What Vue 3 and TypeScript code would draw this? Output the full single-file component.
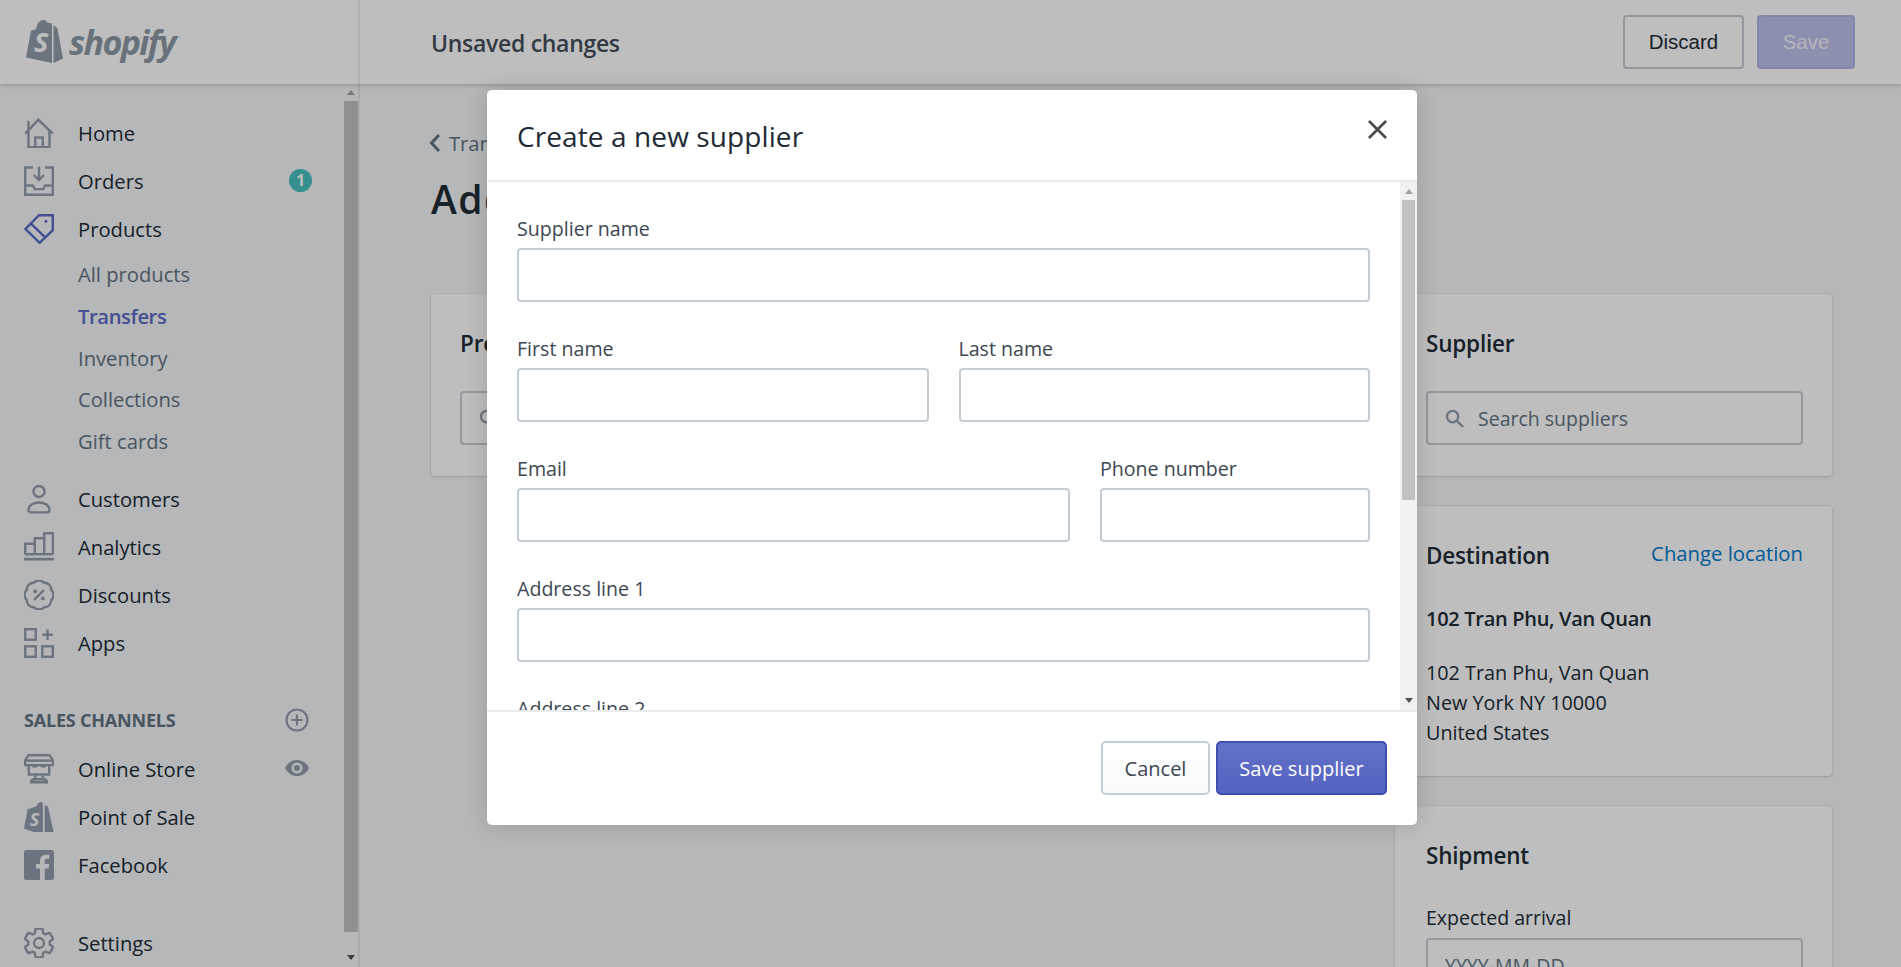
<script setup lang="ts">
interface NavItem { label: string; icon: string; active?: boolean }

const stroke = 'fill="none" stroke="currentColor" stroke-width="1.6"'
const icons: Record<string, string> = {
  home: `<g ${stroke}><path d="M.8 10.400 9.600 1.200l9.600 9.200"/><path d="M3 2v17.400h14V8.500"/><path d="M7.500 19v-6h5v6"/></g>`,
  orders: `<g ${stroke}><path d="M6 1H.8v18.200h18.400V1H14"/><path d="M1 13h5l1.200 2.400h5.600L14 13h5"/><path d="M10 .5V9M6.600 6l3.400 3.400L13.400 6"/></g>`,
  tag: `<g ${stroke}><path d="M19.200.8v10L10.400 19.200 1 10 10 .8z"/><path d="M4.600 6.400 14 15.400"/></g><circle cx="14.600" cy="4.800" r="1" fill="currentColor"/>`,
  customer: `<g ${stroke}><circle cx="10" cy="5" r="3.700"/><path d="M3 17.300c0-3.200 3.200-5 7-5s7 1.800 7 5c0 1-.7 1.600-1.600 1.600H4.600C3.700 18.900 3 18.300 3 17.300z"/></g>`,
  analytics: `<g ${stroke}><path d="M.8 14.800V7.800h6.400V14.800M7.200 14.800V4.200h6.300V14.800M13.500 14.800V.8h5.800v14"/><path d="M.8 14.800h18.500"/></g><path d="M0 17.200h20v1.800H0z" fill="currentColor"/>`,
  discount: `<g ${stroke}><path d="M18.130 6.630A4.500 4.500 0 0 0 13.370 1.870 4.500 4.500 0 0 0 6.630 1.870 4.500 4.500 0 0 0 1.870 6.630 4.500 4.500 0 0 0 1.870 13.370 4.500 4.500 0 0 0 6.630 18.130 4.500 4.500 0 0 0 13.370 18.130 4.500 4.500 0 0 0 18.130 13.370 4.500 4.500 0 0 0 18.130 6.630z"/><path d="M6.800 13.200 13.200 6.800"/></g><circle cx="7.500" cy="7.700" r="1.300" fill="currentColor"/><circle cx="12.500" cy="12.300" r="1.300" fill="currentColor"/>`,
  apps: `<g ${stroke}><rect x=".8" y=".8" width="7" height="7"/><rect x=".8" y="12.200" width="7" height="7"/><rect x="12.200" y="12.200" width="7" height="7"/><path d="M15.700 1v7M12.200 4.500h7"/></g>`,
  store: `<g ${stroke}><path d="M3 .8h14l2.300 3.400v3.200H.7V4.200z"/><path d="M.7 4.400h18.600"/><path d="M3.200 7.400v6.300h13.600V7.400"/><path d="M7.500 13.700v3M12.500 13.700v3"/><path d="M4.800 18.800c0-1.300.8-2 2-2h6.400c1.200 0 2 .7 2 2z"/><path d="M5.800 7.400c0 1.300 2.800 1.300 2.800 0M11.400 7.400c0 1.300 2.800 1.300 2.800 0"/></g>`,
  pos: `<path d="M0 17.800 2.400 4.800 8.200 3C9 1 10.400-.3 12-.3l.6 2V22z" fill="currentColor"/><path d="M13.800 1.800 16 3.200 20 21 13.800 22z" fill="currentColor"/><text x="3.800" y="16" font-family="Open Sans, sans-serif" font-size="12" font-weight="700" font-style="italic" fill="#f4f6f8">S</text>`,
  facebook: `<rect width="20" height="20" rx="1.500" fill="currentColor"/><path d="M13.800 20v-7.700h2.600l.4-3h-3V7.400c0-.9.300-1.500 1.500-1.500h1.600V3.200c-.3 0-1.200-.1-2.300-.1-2.300 0-3.900 1.400-3.900 4v2.200H8v3h2.700V20z" fill="#f4f6f8"/>`,
  settings: `<g transform="translate(-2 -2)" fill="none" stroke="currentColor" stroke-width="1.600"><path d="M19.140 12.940c.04-.3.06-.61.06-.94 0-.32-.02-.64-.07-.94l2.030-1.580c.18-.14.23-.41.12-.61l-1.920-3.320c-.12-.22-.37-.29-.59-.22l-2.390.96c-.5-.38-1.030-.7-1.620-.94L14.400 2.810c-.04-.24-.24-.41-.48-.41h-3.840c-.24 0-.43.17-.47.41L9.250 5.350c-.59.24-1.130.57-1.620.94l-2.390-.96c-.22-.08-.47 0-.59.22L2.740 8.870c-.12.21-.08.47.12.61l2.030 1.580c-.05.3-.09.63-.09.94s.02.64.07.94l-2.030 1.580c-.18.14-.23.41-.12.61l1.920 3.320c.12.22.37.29.59.22l2.390-.96c.5.38 1.030.7 1.620.94l.36 2.540c.05.24.24.41.48.41h3.840c.24 0 .44-.17.47-.41l.36-2.540c.59-.24 1.130-.56 1.620-.94l2.390.96c.22.08.47 0 .59-.22l1.920-3.320c.12-.22.07-.47-.12-.61z"/><circle cx="12" cy="12" r="3.300"/></g>`,
}

const primary: NavItem[] = [
  { label: 'Home', icon: 'home' },
  { label: 'Orders', icon: 'orders' },
  { label: 'Products', icon: 'tag', active: true },
]
const subItems = ['All products', 'Transfers', 'Inventory', 'Collections', 'Gift cards']
const secondary: NavItem[] = [
  { label: 'Customers', icon: 'customer' },
  { label: 'Analytics', icon: 'analytics' },
  { label: 'Discounts', icon: 'discount' },
  { label: 'Apps', icon: 'apps' },
]
const channels: NavItem[] = [
  { label: 'Online Store', icon: 'store' },
  { label: 'Point of Sale', icon: 'pos' },
  { label: 'Facebook', icon: 'facebook' },
]
</script>

<template>
  <div class="page">
    <header class="topbar">
      <div class="brand">
        <svg class="bag" viewBox="0 0 37 43" aria-hidden="true">
          <path d="M0 37.500 5 10.800 10 9.200C11 3.500 14 .3 17 0c2.500-.2 3.800 1.300 4.500 2.800L26 3.600V43z" fill="currentColor" />
          <path d="M27.500 5 31.500 8.500 37 38.500 27.500 43z" fill="currentColor" />
          <text x="8" y="32" class="bag-s">S</text>
        </svg>
        <span class="wordmark">shopify</span>
      </div>
      <div class="bar-main">
        <span class="bar-title">Unsaved changes</span>
        <div class="bar-actions">
          <button class="bar-btn">Discard</button>
          <button class="bar-btn bar-save">Save</button>
        </div>
      </div>
    </header>

    <div class="frame">
      <aside class="sidebar">
        <nav class="nav">
          <a v-for="item in primary" :key="item.label" class="row">
            <svg class="icon" :class="{ on: item.active }" viewBox="0 0 20 20" v-html="icons[item.icon]"></svg>
            <span>{{ item.label }}</span>
            <span v-if="item.label === 'Orders'" class="badge">1</span>
          </a>
          <div class="subs">
            <a v-for="sub in subItems" :key="sub" class="sub" :class="{ current: sub === 'Transfers' }">{{ sub }}</a>
          </div>
          <div class="group">
            <a v-for="item in secondary" :key="item.label" class="row">
              <svg class="icon" viewBox="0 0 20 20" v-html="icons[item.icon]"></svg>
              <span>{{ item.label }}</span>
            </a>
          </div>
          <div class="section">
            <span>SALES CHANNELS</span>
            <svg class="mini" viewBox="0 0 24 24" fill="none" stroke="currentColor" stroke-width="2.200">
              <circle cx="12" cy="12" r="10.500" />
              <path d="M12 6.500v11M6.500 12h11" />
            </svg>
          </div>
          <a v-for="item in channels" :key="item.label" class="row">
            <svg class="icon" viewBox="0 0 20 20" v-html="icons[item.icon]"></svg>
            <span>{{ item.label }}</span>
            <svg v-if="item.label === 'Online Store'" class="mini eye" viewBox="0 0 24 24">
              <path d="M0 12C3 6.500 7 4 12 4s9 2.500 12 8c-3 5.500-7 8-12 8S3 17.500 0 12z" fill="currentColor" />
              <circle cx="12" cy="12" r="5.500" fill="#f4f6f8" />
              <circle cx="12" cy="12" r="3" fill="currentColor" />
            </svg>
          </a>
          <a class="row settings">
            <svg class="icon" viewBox="0 0 20 20" v-html="icons.settings"></svg>
            <span>Settings</span>
          </a>
        </nav>
        <div class="side-scroll">
          <i class="arrow up"></i>
          <div class="side-thumb"></div>
          <i class="arrow down"></i>
        </div>
      </aside>

      <main class="main">
        <a class="crumb">
          <svg viewBox="0 0 12 20" fill="none" stroke="currentColor" stroke-width="3"><path d="M10 2 2.500 10l7.500 8" /></svg>
          Transfers
        </a>
        <h1>Add transfer</h1>
        <div class="columns">
          <div class="left">
            <section class="card">
              <h2>Products</h2>
              <div class="field-box">
                <svg class="glass" viewBox="0 0 20 20" fill="none" stroke="currentColor" stroke-width="2.400"><circle cx="8" cy="8" r="6" /><path d="m13 13 6 6" /></svg>
                <span>Search products</span>
              </div>
            </section>
          </div>
          <div class="right">
            <section class="card">
              <h2>Supplier</h2>
              <div class="field-box">
                <svg class="glass" viewBox="0 0 20 20" fill="none" stroke="currentColor" stroke-width="2.400"><circle cx="8" cy="8" r="6" /><path d="m13 13 6 6" /></svg>
                <span>Search suppliers</span>
              </div>
            </section>
            <section class="card dest">
              <div class="dest-head">
                <h2>Destination</h2>
                <a class="link">Change location</a>
              </div>
              <p class="strong">102 Tran Phu, Van Quan</p>
              <p class="addr">102 Tran Phu, Van Quan<br />New York NY 10000<br />United States</p>
            </section>
            <section class="card">
              <h2>Shipment</h2>
              <label class="ship-label">Expected arrival</label>
              <div class="field-box plain"><span>YYYY-MM-DD</span></div>
            </section>
          </div>
        </div>
      </main>
    </div>

    <div class="overlay">
      <div class="modal">
        <div class="m-head">
          <span class="m-title">Create a new supplier</span>
          <svg class="m-close" viewBox="0 0 20 20" fill="none" stroke="currentColor" stroke-width="2.800"><path d="m1 1 18 18M19 1 1 19" /></svg>
        </div>
        <div class="m-body">
          <form class="form">
            <div class="f-row">
              <label class="f-field"><span>Supplier name</span><input type="text" /></label>
            </div>
            <div class="f-row">
              <label class="f-field half"><span>First name</span><input type="text" /></label>
              <label class="f-field half"><span>Last name</span><input type="text" /></label>
            </div>
            <div class="f-row">
              <label class="f-field email"><span>Email</span><input type="text" /></label>
              <label class="f-field phone"><span>Phone number</span><input type="text" /></label>
            </div>
            <div class="f-row">
              <label class="f-field"><span>Address line 1</span><input type="text" /></label>
            </div>
            <div class="f-row">
              <label class="f-field"><span>Address line 2</span><input type="text" /></label>
            </div>
          </form>
          <div class="m-scroll">
            <i class="arrow up"></i>
            <div class="m-thumb"></div>
            <i class="arrow down"></i>
          </div>
        </div>
        <div class="m-foot">
          <button class="btn">Cancel</button>
          <button class="btn btn-primary">Save supplier</button>
        </div>
      </div>
    </div>
  </div>
</template>

<style>
html, body { margin: 0; overflow: hidden; }
</style>

<style scoped>
.page {
  position: relative;
  width: 1901px;
  height: 967px;
  overflow: hidden;
  background: #f4f6f8;
  color: #212b36;
  font-family: "Open Sans", "Noto Sans", sans-serif;
  font-size: 20.200px;
}
.topbar {
  position: relative;
  z-index: 2;
  display: flex;
  height: 84px;
  background: #fff;
  box-shadow: 0 1px 5px rgba(0, 0, 0, .22);
}
.brand {
  width: 360px;
  box-sizing: border-box;
  border-right: 2px solid #eceef0;
  display: flex;
  align-items: center;
  gap: 6px;
  padding-left: 26px;
  color: #919eab;
}
.bag { width: 37px; height: 43px; margin-top: -1px; }
.bag-s { font: italic 700 27px "Open Sans", sans-serif; fill: #fff; }
.wordmark {
  font: italic 700 34px/1 "Open Sans", sans-serif;
  letter-spacing: -1.600px;
  color: #8e9aa6;
}
.bar-main {
  flex: 1;
  display: flex;
  align-items: center;
  justify-content: space-between;
  padding: 0 46px 0 71px;
}
.bar-title { font-size: 23px; font-weight: 600; color: #454f5b; letter-spacing: -.3px; margin-top: 1px; }
.bar-actions { display: flex; gap: 13px; }
.bar-btn {
  height: 54px;
  width: 121px;
  box-sizing: border-box;
  border: 2px solid #c4cdd5;
  border-radius: 4px;
  background: #fff;
  color: #212b36;
  font: 20.500px "Liberation Sans", Arial, sans-serif;
  padding: 0;
}
.bar-save {
  width: 98px;
  background: #bcc0ea;
  border-color: #aeb4e4;
  color: #f2f3fa;
}
.frame { display: flex; height: 883px; }
.sidebar {
  width: 360px;
  flex: none;
  box-sizing: border-box;
  border-right: 2px solid #e3e6e9;
  display: flex;
}
.nav { flex: 1; padding: 25px 0 0 24px; min-width: 0; }
.row {
  display: flex;
  align-items: center;
  height: 48px;
  gap: 24px;
  position: relative;
}
.icon { width: 30px; height: 30px; flex: none; color: #919eab; }
.icon.on { color: #5c6ac4; }
.badge {
  position: absolute;
  left: 265px;
  top: 12px;
  width: 23px;
  height: 23px;
  border-radius: 50%;
  background: #47c1bf;
  color: #fff;
  font-size: 16px;
  font-weight: 700;
  line-height: 23px;
  text-align: center;
}
.subs { margin-top: 1px; }
.sub {
  display: block;
  height: 41.800px;
  line-height: 41.800px;
  padding-left: 54px;
  color: #637381;
}
.sub.current { color: #5c6ac4; font-weight: 600; letter-spacing: -.4px; }
.group { margin-top: 12px; }
.section {
  display: flex;
  align-items: center;
  justify-content: space-between;
  height: 24px;
  margin: 41px 0 13px;
  padding-right: 35px;
  color: #637381;
  font-size: 18px;
  font-weight: 700;
  letter-spacing: -.2px;
}
.mini { width: 24px; height: 24px; color: #919eab; }
.eye { position: absolute; left: 261px; top: 11px; }
.settings { margin-top: 30px; }
.side-scroll {
  width: 14px;
  display: flex;
  flex-direction: column;
  align-items: center;
}
.side-thumb { width: 14px; height: 831px; background: #c1c1c1; }
.arrow {
  display: block;
  width: 0;
  height: 0;
  border-left: 4px solid transparent;
  border-right: 4px solid transparent;
}
.arrow.up { border-bottom: 5px solid #a3a3a3; margin: 6px 0; }
.arrow.down { border-top: 5px solid #505050; margin: 23px 0 0; }
.main { flex: 1; padding: 46px 69px 0 71px; min-width: 0; }
.crumb {
  display: flex;
  align-items: center;
  gap: 8px;
  height: 26px;
  margin-left: -2px;
  color: #637381;
}
.crumb svg { width: 12px; height: 20px; }
h1 {
  margin: 18px 0 70px;
  height: 50px;
  font-size: 39px;
  line-height: 50px;
  font-weight: 600;
  letter-spacing: 1.500px;
}
.columns { display: flex; gap: 30px; }
.left { flex: 1; min-width: 0; }
.left .card { padding-left: 29px; }
.right { width: 437px; flex: none; display: flex; flex-direction: column; gap: 30px; }
.card {
  box-sizing: border-box;
  background: #fff;
  border-radius: 4px;
  padding: 36px 29px 31px 31px;
  box-shadow: 0 0 0 1px rgba(63, 63, 68, .05), 0 1px 3px rgba(63, 63, 68, .15);
}
.card.dest { padding-top: 36px; padding-bottom: 28px; }
h2 { margin: 0; font-size: 22.500px; line-height: 28px; font-weight: 600; letter-spacing: -.2px; }
.field-box {
  display: flex;
  align-items: center;
  gap: 14px;
  box-sizing: border-box;
  height: 54px;
  margin-top: 33px;
  padding: 0 17px;
  border: 2px solid #c4cdd5;
  border-radius: 4px;
  color: #637381;
  font-size: 19.500px;
}
.glass { width: 19px; height: 19px; color: #919eab; flex: none; }
.dest-head { display: flex; justify-content: space-between; align-items: flex-start; }
.link { color: #007ace; font-size: 20.300px; line-height: 24px; margin-top: -1px; }
.strong { margin: 34px 0 0; font-size: 20px; font-weight: 600; line-height: 30px; letter-spacing: -.3px; }
.addr { margin: 24px 0 0; line-height: 30px; font-size: 19.800px; }
.ship-label { display: block; margin-top: 36px; font-size: 19.500px; line-height: 24px; }
.plain { margin-top: 8px; }
.overlay {
  position: absolute;
  inset: 0;
  z-index: 3;
  background: rgba(0, 0, 0, .254);
}
.modal {
  width: 930px;
  height: 735px;
  margin: 90px 0 0 487px;
  display: flex;
  flex-direction: column;
  background: #fff;
  border-radius: 5px;
  box-shadow: 0 0 22px rgba(0, 0, 0, .16);
  overflow: hidden;
}
.m-head {
  flex: none;
  height: 92px;
  box-sizing: border-box;
  border-bottom: 2px solid #e9ebed;
  padding: 0 30px;
  display: flex;
  align-items: center;
  justify-content: space-between;
}
.m-title { font-size: 28px; color: #212b36; margin-top: 2px; letter-spacing: .1px; }
.m-close { width: 19px; height: 19px; color: #4a4a4a; margin: -11px 0 0 0; }
.m-body { flex: 1; min-height: 0; display: flex; overflow: hidden; }
.form {
  flex: 1;
  padding: 34px 30px 0;
  min-width: 0;
  display: flex;
  flex-direction: column;
  gap: 34px;
}
.f-row { display: flex; gap: 30px; }
.f-field { display: flex; flex-direction: column; flex: 1; min-width: 0; gap: 7px; }
.f-field span { font-size: 19.600px; line-height: 25px; color: #3d4753; }
.f-field input {
  box-sizing: border-box;
  width: 100%;
  height: 54px;
  border: 2px solid #c4cdd5;
  border-radius: 4px;
  outline: none;
  background: #fff;
}
.phone { flex: none; width: 270px; }
.m-scroll {
  width: 17px;
  flex: none;
  background: #f1f1f1;
  display: flex;
  flex-direction: column;
  align-items: center;
}
.m-thumb { width: 13px; height: 300px; background: #c1c1c1; margin-top: 6px; }
.m-scroll .arrow.up { margin: 7px 0 0; }
.m-scroll .arrow.down { margin: auto 0 7px; }
.m-foot {
  flex: none;
  height: 115px;
  box-sizing: border-box;
  border-top: 2px solid #e9ebed;
  padding: 0 30px 1px 0;
  display: flex;
  align-items: center;
  justify-content: flex-end;
  gap: 6px;
}
.btn {
  height: 54px;
  width: 109px;
  box-sizing: border-box;
  border: 2px solid #c4cdd5;
  border-radius: 5px;
  background: linear-gradient(#fff, #f9fafb);
  color: #3d4753;
  font: 20px "Open Sans", sans-serif;
  padding: 0;
}
.btn-primary {
  width: 171px;
  border-color: #3f4eae;
  background: linear-gradient(#6371c7, #5563c1);
  color: #fff;
}
</style>
